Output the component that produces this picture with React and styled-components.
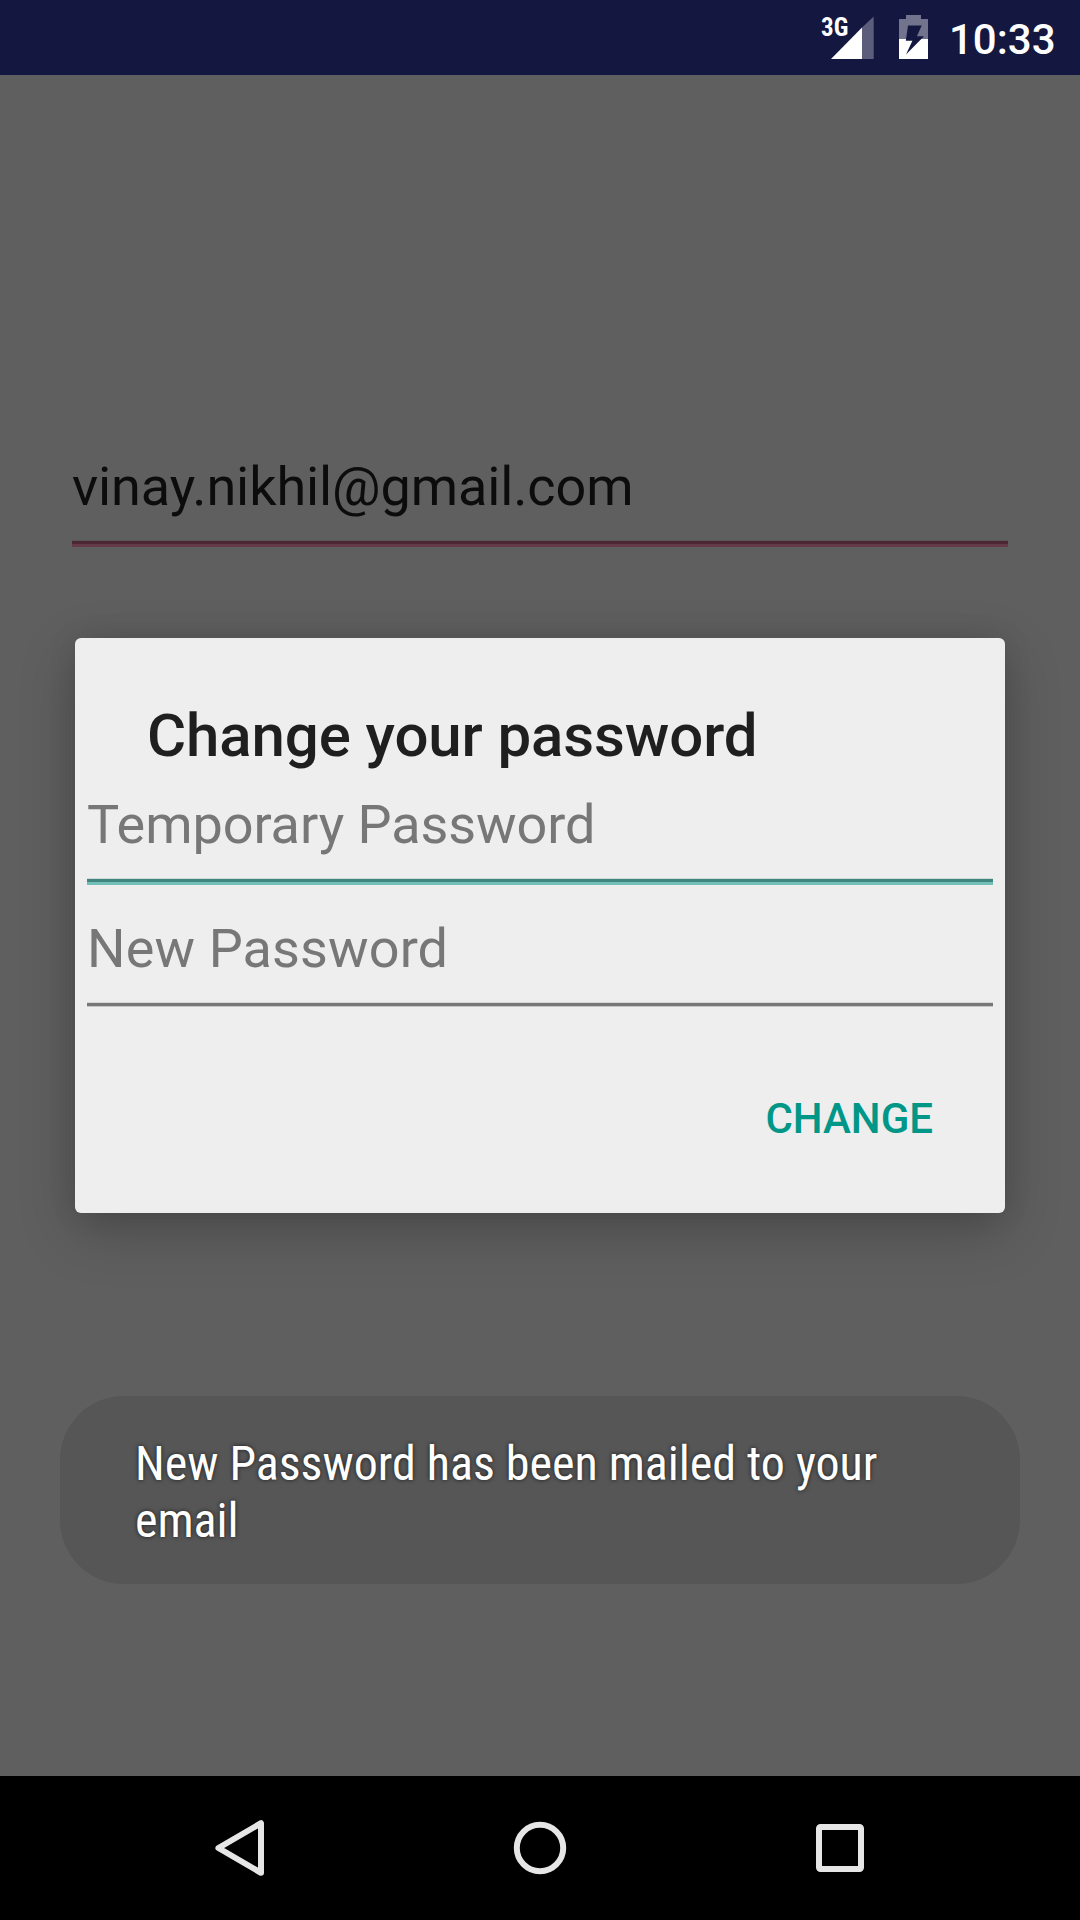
import React from 'react';
import styled, { createGlobalStyle } from 'styled-components';

const Global = createGlobalStyle`
  *, *::before, *::after { box-sizing: border-box; }
  body { margin: 0; background: #000; }
`;

const Screen = styled.div`
  position: relative;
  display: flex;
  flex-direction: column;
  width: 1080px;
  height: 1920px;
  overflow: hidden;
  font-family: Roboto, 'Noto Sans', sans-serif;
  font-kerning: normal;
`;

const StatusBar = styled.header`
  display: flex;
  justify-content: flex-end;
  align-items: flex-start;
  height: 75px;
  padding-right: 25px;
  background: #141841;
  color: #fff;
`;

const Network = styled.span`
  width: 26px;
  margin-top: 13px;
  font-family: 'Roboto Condensed', Roboto, sans-serif;
  font-stretch: condensed;
  font-size: 25px;
  font-weight: 700;
  line-height: 29px;
  white-space: nowrap;
`;

const StatusIcon = styled.svg`
  display: block;
  flex: none;
  margin: 15px ${(p) => p.$after}px 0 ${(p) => p.$before}px;
`;

const Clock = styled.time`
  width: 106px;
  margin-top: 15px;
  font-size: 42px;
  font-weight: 500;
  line-height: 49px;
  white-space: nowrap;
`;

const Body = styled.main`
  flex: 1;
  padding: 380px 72px 0;
  background: #5f5f5f;
`;

const Field = styled.div`
  display: flex;
  flex-direction: column;
  font-size: 54px;
  line-height: 64px;
  letter-spacing: ${(p) => p.$tracking}px;
  color: ${(p) => p.$color};
  white-space: nowrap;
`;

const Underline = styled.div`
  height: ${(p) => p.$top + p.$bottomHeight + 1}px;
  margin-top: 21px;
  background: linear-gradient(
    ${(p) => p.$edge} 0 1px,
    ${(p) => p.$dark} 1px ${(p) => p.$top + 1}px,
    ${(p) => p.$light} ${(p) => p.$top + 1}px
  );
`;

const NavBar = styled.nav`
  display: flex;
  justify-content: center;
  height: 144px;
  background: #000;
`;

const NavButton = styled.button`
  display: flex;
  align-items: center;
  justify-content: center;
  width: 300px;
  height: 144px;
  padding: 0;
  border: 0;
  background: none;
`;

const DialogLayer = styled.div`
  position: absolute;
  inset: 75px 0 144px;
  display: flex;
  align-items: center;
  justify-content: center;
`;

const Dialog = styled.section`
  display: flex;
  flex-direction: column;
  width: 930px;
  height: 575px;
  border-radius: 6px;
  background: #eee;
  box-shadow: 0 18px 56px rgba(0, 0, 0, 0.22), 0 0 28px rgba(0, 0, 0, 0.1);
`;

const Title = styled.h2`
  margin: 0;
  padding: 63px 72px 0;
  font-size: 60px;
  font-weight: 500;
  line-height: 70px;
  letter-spacing: -0.11px;
  color: #1f1f1f;
  white-space: nowrap;
`;

const Fields = styled.div`
  display: flex;
  flex-direction: column;
  gap: 32px;
  padding: 22px 12px 0;
`;

const Actions = styled.footer`
  display: flex;
  justify-content: flex-end;
  margin-top: 87px;
  padding-right: 72px;
`;

const TextButton = styled.button`
  padding: 0;
  border: 0;
  background: none;
  font: 500 42px/49px Roboto, sans-serif;
  color: #009688;
`;

const Toast = styled.aside`
  position: absolute;
  left: 60px;
  top: 1396px;
  width: 960px;
  height: 188px;
  padding: 39px 75px;
  border-radius: 64px;
  background: #565656;
  font-family: 'Roboto Condensed', Roboto, sans-serif;
  font-stretch: condensed;
  font-size: 48px;
  line-height: 57px;
  letter-spacing: -0.01px;
  color: #fff;
  text-shadow: 0 0 4px rgba(0, 0, 0, 0.7);
`;

const ToastLine = styled.div`
  white-space: nowrap;
`;

export default function App() {
  return (
    <Screen>
      <Global />
      <StatusBar>
        <Network>3G</Network>
        <StatusIcon $before={-16} $after={25} width="43" height="45" viewBox="0 0 43 45">
          <path d="M31 12.5L42.7 1.5V44H31z" fill="#5b5d7a" />
          <path d="M0 44L31 12.5V44z" fill="#fff" />
        </StatusIcon>
        <StatusIcon $before={0} $after={21} width="29" height="45" viewBox="0 0 29 45">
          <path d="M0 4H7V0H22V4H29V24H0z" fill="#72748d" />
          <path d="M0 24H29V44H0z" fill="#fff" />
          <path d="M9 10.5H22.7L17.9 21.3H25L7 39.5L13.4 25.8H6.8z" fill="#141841" />
        </StatusIcon>
        <Clock>10:33</Clock>
      </StatusBar>
      <Body>
        <Field $color="#0c0c0c" $tracking={-0.11}>
          vinay.nikhil@gmail.com
          <Underline $edge="#595657" $top={3} $bottomHeight={3} $dark="#4b2633" $light="#653a48" />
        </Field>
      </Body>
      <NavBar>
        <NavButton aria-label="Back">
          <svg width="56" height="60" viewBox="0 0 56 60" fill="none">
            <path d="M6.4 30L49 5.2V54.8z" stroke="#e6e6e6" strokeWidth="6" strokeLinejoin="round" />
          </svg>
        </NavButton>
        <NavButton aria-label="Home">
          <svg width="60" height="60" viewBox="0 0 60 60" fill="none">
            <circle cx="30" cy="30" r="23.2" stroke="#e6e6e6" strokeWidth="6" />
          </svg>
        </NavButton>
        <NavButton aria-label="Overview">
          <svg width="60" height="60" viewBox="0 0 60 60" fill="none">
            <rect x="9" y="9" width="42" height="42" rx="1.5" stroke="#e6e6e6" strokeWidth="6" />
          </svg>
        </NavButton>
      </NavBar>
      <DialogLayer>
        <Dialog role="dialog">
          <Title>Change your password</Title>
          <Fields>
            <Field $color="#777" $tracking={-0.06}>
              Temporary Password
              <Underline $edge="#cfdad8" $top={3} $bottomHeight={3} $dark="#3f857d" $light="#72bfb7" />
            </Field>
            <Field $color="#777" $tracking={0.13}>
              New Password
              <Underline $edge="#d6d6d6" $top={3} $bottomHeight={1} $dark="#777" $light="#c6c6c6" />
            </Field>
          </Fields>
          <Actions>
            <TextButton>CHANGE</TextButton>
          </Actions>
        </Dialog>
      </DialogLayer>
      <Toast>
        <ToastLine>New Password has been mailed to your</ToastLine>
        <ToastLine>email</ToastLine>
      </Toast>
    </Screen>
  );
}
